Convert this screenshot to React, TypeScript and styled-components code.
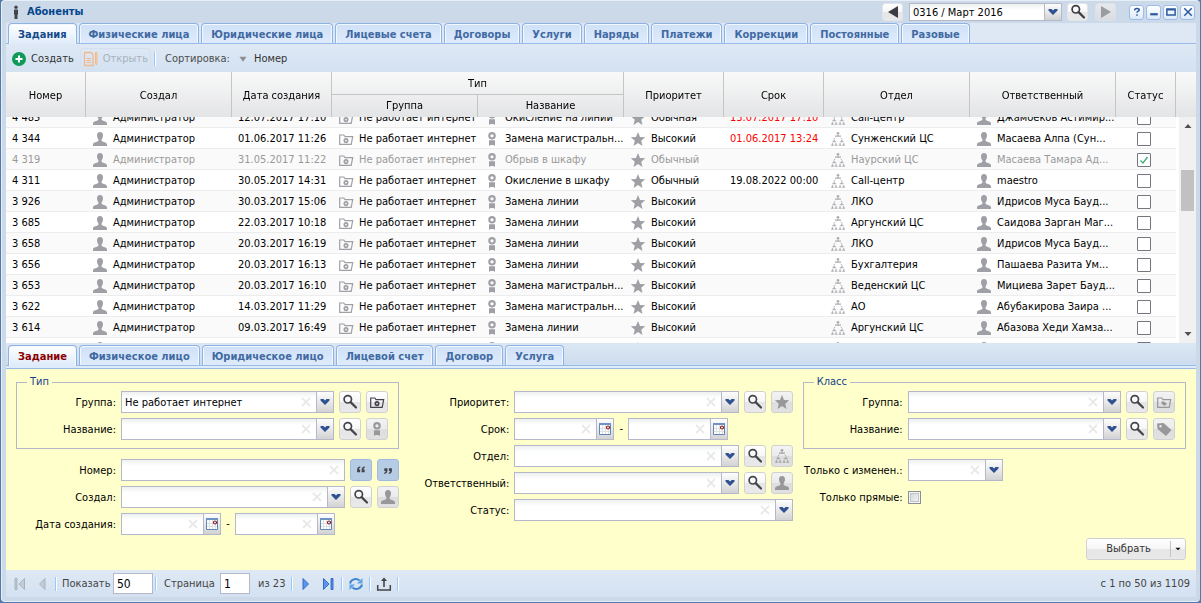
import React, { useLayoutEffect, useRef } from 'react';
import styled, { createGlobalStyle, css } from 'styled-components';

const GlobalStyle = createGlobalStyle`
  * { box-sizing: border-box; }
  body { margin: 0; background: #5279a8; }
  body, button, input, select {
    font-family: Tahoma, "DejaVu Sans Condensed", "Noto Sans", sans-serif;
    font-size: 11px;
    line-height: 14px;
  }
  button, input, select { margin: 0; color: inherit; }
`;

/* ---------- icons ---------- */

type IconName =
  | 'user' | 'folder' | 'award' | 'star' | 'sitemap' | 'tag' | 'tagFolder' | 'search'
  | 'person' | 'add' | 'edit' | 'sort' | 'quoteOpen' | 'quoteClose' | 'left' | 'right'
  | 'first' | 'prev' | 'next' | 'last' | 'refresh' | 'export' | 'calendar' | 'chevron' | 'caret'
  | 'clear' | 'help' | 'minimize' | 'maximize' | 'close' | 'up' | 'down';

const folderOutline = (
  <path d="M12.500 5.700H7L5.800 4H1.700v9.300h11.500l1.500-7.600h-2.200" fill="none" stroke="currentColor" strokeWidth="1.200" />
);

const drawings: Record<IconName, React.ReactNode> = {
  user: <path d="M8 1C5.900 1 5 2.300 5 4.300c0 1.700.6 3.100 1.400 3.900v1.600C5.600 11.200 1 11 1 13.600V15h14v-1.400c0-2.600-4.600-2.400-5.400-3.800V8.200C10.400 7.400 11 6 11 4.300 11 2.300 10.100 1 8 1z" />,
  folder: <>{folderOutline}<circle cx="8" cy="9.600" r="1.700" fill="none" stroke="currentColor" strokeWidth="1.700" /></>,
  award: <><circle cx="8" cy="4.800" r="2.700" fill="none" stroke="currentColor" strokeWidth="2.100" /><path d="M5 9.200h6V15l-1.500-1h-3L5 15z" /></>,
  star: <path d="M8 1l2 4.900 5.200.4-4 3.400 1.300 5.200L8 12.100l-4.500 2.800 1.300-5.200-4-3.400L6 5.900z" />,
  sitemap: <g opacity=".85"><circle cx="8" cy="2.200" r="1.300" /><path d="M7.300 3.500h1.400v1H11v1.300H5V4.500h2.300z" /><path d="M5.200 7.200L3.600 8.400M10.800 7.200l1.600 1.200" stroke="currentColor" /><path d="M3.600 9h1.300v1.200h1.300v1H2.300v-1h1.300zM11.100 9h1.300v1.200h1.300v1H9.800v-1h1.300zM1.800 12.300h1.300v1.400h.7v1H1.100v-1h.7zM5.400 12.300h1.300v1.400h.7v1H4.700v-1h.7zM9.400 12.300h1.300v1.400h.7v1H8.700v-1h.7zM13 12.300h1.300v1.400h.7v1h-2.700v-1h.7z" /></g>,
  tag: <path fillRule="evenodd" d="M1 2.500L7.500 2l8 7-5.500 6L1.500 8zM4.500 4a1.200 1.200 0 100 2.400 1.200 1.200 0 000-2.400z" />,
  tagFolder: <>{folderOutline}<path d="M5.500 7.500h2.500l3 2.300-2.200 2.200-3.300-2.300z" /></>,
  search: <><circle cx="5.800" cy="5.300" r="3.700" fill="none" stroke="currentColor" strokeWidth="1.700" /><path d="M8.600 8.100l5.400 5.400" stroke="currentColor" strokeWidth="2.200" strokeLinecap="round" /></>,
  person: <><circle cx="8" cy="3.200" r="1.700" /><path d="M6 5.500h4v5H9.500V15h-3v-4.500H6z" /></>,
  add: <><circle cx="8" cy="8" r="7" fill="#0f9a57" /><path d="M4.500 8h7M8 4.500v7" stroke="#fff" strokeWidth="2" /></>,
  edit: <g fill="none" stroke="#f2b98a"><path d="M1.500 1.500h6.500l2 2v11H1.500z" strokeWidth="1.300" /><path d="M3.500 7.500h4.500M3.500 9.500h4.500M3.500 11.500h4.500" /><path d="M12.500 1.500h1.500v11l-.7 1.500-.8-1.500z" fill="#f7d4b2" /></g>,
  sort: <path d="M4 5.500h8L8 11z" fill="#8d8d92" />,
  quoteOpen: <path d="M7.200 4C4.700 4.300 3.500 5.700 3.500 8v2.500h3.500v-3H5.500c0-1 .5-1.600 1.700-2zM12.400 4C9.900 4.300 8.700 5.700 8.700 8v2.500h3.500v-3h-1.500c0-1 .5-1.600 1.700-2z" />,
  quoteClose: <path d="M3.600 12.500c2.500-.3 3.700-1.700 3.700-4V6H3.800v3h1.500c0 1-.5 1.600-1.700 2zM8.800 12.500c2.500-.3 3.700-1.700 3.700-4V6H9v3h1.500c0 1-.5 1.600-1.700 2z" />,
  left: <path d="M13 2v12L3 8z" />,
  right: <path d="M3 2v12l10-6z" />,
  first: <g fill="#c3cbd4" stroke="#9aa4b0" strokeWidth=".7"><path d="M3 2.500h2v11H3zM12.500 2.500v11L7 8z" /></g>,
  prev: <path d="M11 2.500v11L5.500 8z" fill="#c3cbd4" stroke="#9aa4b0" strokeWidth=".7" />,
  next: <path d="M5 2.500v11L10.500 8z" fill="#5b97ee" stroke="#1e55b8" strokeWidth=".8" />,
  last: <g fill="#5b97ee" stroke="#1e55b8" strokeWidth=".8"><path d="M11 2.500h2v11h-2zM3.500 2.500v11L9 8z" /></g>,
  refresh: <g fill="none" stroke="#3d85cf" strokeWidth="2"><path d="M2 7.500C2.800 3.500 8 1.500 11.500 4.500" /><path d="M14 8.500c-.8 4-6 6-9.500 3" /><path d="M14.500 2v5.500H9z" fill="#5ea3e6" stroke="none" /><path d="M1.500 14V8.500H7z" fill="#5ea3e6" stroke="none" /></g>,
  export: <><path d="M1.700 9v5h12.600V9" fill="none" stroke="currentColor" strokeWidth="1.500" /><path d="M8 1.500l3 3.500H8.800v6H7.200V5H5z" /></>,
  calendar: <><path d="M2.500 2.500h11v11h-11z" fill="#fff" stroke="#5f86b5" /><path d="M2 2h12v2H2z" fill="#6f94c2" /><path d="M3 7.500h10M3 10.500h10M5.500 4v9M8.500 4v9M11.500 8v5" stroke="#dde1e6" /><circle cx="11" cy="6.500" r="1.500" fill="#fff" stroke="#8b1a1a" strokeWidth="1.200" /></>,
  chevron: <path d="M3.500 5h3L8 6.500 9.500 5h3v1.500L8 11 3.500 6.500z" fill="#2f5192" />,
  caret: <path d="M5 6.500h6L8 9.500z" fill="#111" />,
  clear: <path d="M4 4l8 8M12 4l-8 8" stroke="#e9e9eb" strokeWidth="1.800" />,
  help: <path d="M5 6V5q0-1.700 3-1.700t3 1.900c0 1.700-3 1.800-3 3.900M8 11v2" fill="none" stroke="currentColor" strokeWidth="2" />,
  minimize: <path d="M3 9.500h10v3H3z" />,
  maximize: <path fillRule="evenodd" d="M1.500 3h13v10h-13zM3.500 6v5h9V6z" />,
  close: <path d="M3 3l10 10M13 3L3 13" stroke="currentColor" strokeWidth="2" />,
  up: <path d="M4.500 10h7L8 6z" fill="#505050" />,
  down: <path d="M4.500 6h7L8 10z" fill="#505050" />,
};

const Svg = styled.svg<{ $size: number }>`
  display: block;
  flex: none;
  width: ${p => p.$size}px;
  height: ${p => p.$size}px;
`;

const Icon = ({ name, size = 16 }: { name: IconName; size?: number }) => (
  <Svg $size={size} viewBox="0 0 16 16" fill="currentColor" aria-hidden="true">{drawings[name]}</Svg>
);

/* ---------- window ---------- */

const Window = styled.main`
  display: flex;
  flex-direction: column;
  height: 100vh;
  min-height: 480px;
  border: solid #5279a8;
  border-width: 0 1px 1px;
`;

const Frame = styled.div`
  display: flex;
  flex: 1;
  flex-direction: column;
  min-height: 0;
  padding: 0 4px 4px;
  border: 1px solid #e6eef8;
  border-width: 1px 0 1px 1px;
  border-radius: 4px;
  background: #ccd9e8;
`;

const TitleBar = styled.header`
  display: flex;
  align-items: center;
  flex: none;
  height: 22px;
  padding: 0 1px 0 2px;
  color: #44444c;
`;

const Title = styled.h1`
  flex: 1;
  margin: 0 0 0 3px;
  color: #04468c;
  font-size: 11px;
  font-weight: bold;
`;

const buttonFace = css`
  border: 1px solid #d1d1d1;
  border-radius: 3px;
  background: linear-gradient(#fff, #f6f6f6 48%, #e6e6e6 52%, #e9e9e9);
`;

const NavButton = styled.button`
  display: flex;
  align-items: center;
  justify-content: center;
  width: 21px;
  height: 18px;
  padding: 0;
  color: #3c3c44;
  ${buttonFace}
  border-color: #e2e5e9;
  &:disabled {
    background: linear-gradient(#e6eaef, #d9dde2);
    border-color: #dce1e7;
    color: #9b9ba0;
  }
`;

const Period = styled.div`
  display: flex;
  width: 153px;
  height: 18px;
  margin: 0 5px 0 6px;
  color: #000;
`;

const NavGroup = styled.div`
  display: flex;
  align-items: center;
  gap: 7px;
`;

const WindowTools = styled.div`
  display: flex;
  gap: 2px;
  margin-left: 13px;
`;

const ToolButton = styled.button`
  display: flex;
  align-items: center;
  justify-content: center;
  width: 15px;
  height: 15px;
  padding: 0;
  border: 1px solid #9dbce8;
  border-radius: 3px;
  background: linear-gradient(#fff, #dce9f9);
  color: #2c5aa0;
`;

/* ---------- tabs ---------- */

const TabStrip = styled.div<{ $lower?: boolean }>`
  display: flex;
  flex: none;
  align-items: flex-end;
  gap: 2px;
  padding: ${p => (p.$lower ? '2px 2px 0' : '0 2px')};
  border-bottom: 1px solid #99bbe8;
  background: ${p => (p.$lower ? 'linear-gradient(#dbe7f3, #cddcee)' : '#dee8f5')};
`;

const TabBand = styled.div`
  flex: none;
  height: 3px;
  border-bottom: 1px solid #99bbe8;
  background: #deebfa;
`;

const Tab = styled.button<{ $active?: boolean; $accent?: boolean }>`
  flex: none;
  height: ${p => (p.$active ? 21 : 20)}px;
  margin-bottom: ${p => (p.$active ? -1 : 0)}px;
  padding: ${p => (p.$active ? '1px 9px 0' : '2px 9px 0')};
  border: 1px solid #8db2e3;
  border-bottom: 0;
  border-radius: 4px 4px 0 0;
  background: ${p => (p.$active ? 'linear-gradient(#fff, #deebfa)' : 'linear-gradient(#cfe1f7, #dfebfc)')};
  box-shadow: inset 0 1px #f2f8ff, inset 1px 0 #f2f8ff, inset -1px 0 #f2f8ff;
  color: ${p => (p.$accent ? '#8b0000' : p.$active ? '#15498b' : '#416aa3')};
  font-weight: bold;
  white-space: nowrap;
`;

/* ---------- toolbars ---------- */

const barFace = css`
  display: flex;
  flex: none;
  align-items: center;
  background: linear-gradient(#dfe9f5, #d3e1f1);
  color: #333;
`;

const Toolbar = styled.div`
  ${barFace}
  gap: 3px;
  height: 28px;
  padding: 2px 2px 0;
`;

const TextButton = styled.button`
  display: flex;
  align-items: center;
  gap: 4px;
  height: 22px;
  padding: 0 2px;
  border: 1px solid transparent;
  border-radius: 3px;
  background: none;
  &:disabled {
    border-color: #d5e0ee;
    color: #a9b1bc;
  }
`;

const Separator = styled.span`
  width: 2px;
  height: 14px;
  border-left: 1px solid #98c8ff;
  border-right: 1px solid #fff;
`;

const ToolbarText = styled.span`
  padding-left: 6px;
  color: #4c4c4c;
`;

/* ---------- grid ---------- */

const GridArea = styled.section`
  position: relative;
  flex: 1;
  min-height: 0;
  background: #fff;
`;

const GridScroll = styled.div`
  height: 100%;
  overflow-x: hidden;
  overflow-y: auto;
  scrollbar-width: none;
`;

const Table = styled.table`
  width: 100%;
  table-layout: fixed;
  border-collapse: separate;
  border-spacing: 0;
`;

const Col = styled.col<{ $w: number }>`
  width: ${p => p.$w}px;
`;

const Head = styled.thead`
  position: sticky;
  top: 0;
  z-index: 1;
  background: linear-gradient(#f9f9f9, #e3e4e6);
`;

const Th = styled.th<{ $group?: boolean; $sub?: boolean; $last?: boolean }>`
  height: ${p => (p.$group ? 23 : p.$sub ? 22 : 45)}px;
  padding: ${p => (p.$sub ? 0 : '2px 0 0')};
  border-right: ${p => (p.$last ? 0 : 1)}px solid #c5c5c5;
  border-bottom: ${p => (p.$group ? 1 : 0)}px solid #c5c5c5;
  font-weight: normal;
  text-align: center;
`;

const Row = styled.tr<{ $done?: boolean }>`
  color: ${p => (p.$done ? '#999' : '#000')};
  &:nth-child(odd) td:not(:last-child) { background: #fafafa; }
`;

const Td = styled.td<{ $late?: boolean; $wide?: boolean }>`
  height: 21px;
  padding: 1px 0 0 ${p => (p.$wide ? 21 : 6)}px;
  overflow: hidden;
  border-bottom: 1px solid #ededed;
  color: ${p => (p.$late ? '#f00' : 'inherit')};
  white-space: nowrap;
  &:last-child { border: 0; }
`;

const Cell = styled.div`
  display: flex;
  align-items: center;
  gap: 5px;
  height: 19px;
  svg { color: #9fa0a6; }
`;

const StatusBox = styled.input`
  display: block;
  width: 14px;
  height: 14px;
  appearance: none;
  border: 1px solid #75757d;
  border-radius: 1px;
  background: #fff;
  &:checked {
    background: #fff url("data:image/svg+xml,%3Csvg xmlns='http://www.w3.org/2000/svg' viewBox='0 0 12 12'%3E%3Cpath d='M2.500 6.500l2.500 2.500 4.500-6' fill='none' stroke='%233fae7c' stroke-width='1.400'/%3E%3C/svg%3E");
  }
`;

const ScrollTrack = styled.div`
  position: absolute;
  top: 45px;
  right: 0;
  bottom: 0;
  z-index: 1;
  display: flex;
  flex-direction: column;
  align-items: center;
  width: 17px;
  padding-bottom: 1px;
  background: #f1f1f1;
  svg { margin: 1px 0 0; }
`;

const ScrollLane = styled.div`
  flex: 1;
  padding-top: 36px;
`;

const ScrollThumb = styled.div`
  width: 13px;
  height: 41px;
  background: #c1c1c1;
`;

/* ---------- form ---------- */

const Form = styled.form`
  display: flex;
  flex: none;
  flex-direction: column;
  gap: 3px;
  padding: 6px 10px 10px;
  background: #ffc;
`;

const FormColumns = styled.div`
  display: grid;
  grid-template-columns: repeat(3, minmax(0, 1fr));
  gap: 10px;
`;

const FormColumn = styled.div<{ $plain?: boolean }>`
  display: flex;
  flex-direction: column;
  gap: 5px;
  padding-top: ${p => (p.$plain ? 16 : 0)}px;
`;

const FieldGroup = styled.fieldset`
  display: grid;
  gap: 5px;
  min-width: 0;
  margin: 0 0 5px;
  padding: 2px 10px 8px;
  border: 1px solid #b5b8c8;
`;

const Legend = styled.legend`
  padding: 0 3px;
  color: #15428b;
`;

const FieldRow = styled.div<{ $nested?: boolean }>`
  display: flex;
  align-items: center;
  gap: 5px;
  height: 22px;
  > label:first-child { width: ${p => (p.$nested ? 89 : 100)}px; }
`;

const Label = styled.label`
  display: flex;
  flex: none;
  justify-content: flex-end;
  padding-top: 1px;
  white-space: nowrap;
`;

const Field = styled.div<{ $w?: number }>`
  display: grid;
  grid-template-columns: minmax(0, 1fr) 18px auto;
  flex: ${p => (p.$w ? `0 0 ${p.$w}px` : '1')};
  min-width: 0;
  height: 100%;
  border: 1px solid #b5b8c8;
  background: linear-gradient(#eef0f0, #fff 6px);
`;

const controlFace = css`
  grid-row: 1;
  grid-column: 1 / -1;
  width: 100%;
  min-width: 0;
  padding: 1px 3px 0;
  border: 0;
  outline: 0;
  background: none;
  appearance: none;
`;
const Select = styled.select`${controlFace}`;
const TextInput = styled.input`${controlFace}`;

const Clear = styled.button`
  grid-row: 1;
  grid-column: 2;
  display: flex;
  align-items: center;
  padding: 0;
  border: 0;
  background: none;
`;

const Trigger = styled.span`
  display: flex;
  grid-row: 1;
  grid-column: 3;
  align-items: center;
  justify-content: center;
  width: 17px;
  border-left: 1px solid #b5b8c8;
  background: linear-gradient(#fdfdfd, #e9e9e9 50%, #d2d2d4);
  pointer-events: none;
`;

const IconButton = styled.button<{ $pressed?: boolean }>`
  display: flex;
  flex: none;
  align-items: center;
  justify-content: center;
  width: 22px;
  height: 22px;
  padding: 0;
  color: #44444c;
  ${buttonFace}
  ${p => p.$pressed && css`
    border-color: #9ebae1;
    background: #b6cbe4;
  `}
  &:disabled {
    background: linear-gradient(#f3f3f3, #ebebeb 48%, #dedede 52%, #e1e1e1);
    color: #98989c;
  }
`;

const Dash = styled.span`
  width: 4px;
  text-align: center;
`;

const Tick = styled.input`
  width: 13px;
  height: 13px;
  margin: 0;
  appearance: none;
  border: 1px solid #8e8f8f;
  background: linear-gradient(135deg, #cfd3d6, #f6f6f6);
  box-shadow: inset 0 0 0 1px #f4f4f4, inset 0 0 0 2px #c3c7cb;
`;

const Actions = styled.div`
  display: flex;
  justify-content: flex-end;
`;

const SplitButton = styled.div`
  display: flex;
  align-items: center;
  width: 100px;
  height: 22px;
  ${buttonFace}
`;

const SplitPart = styled.button<{ $menu?: boolean }>`
  display: flex;
  flex: ${p => (p.$menu ? 'none' : '1')};
  align-items: center;
  justify-content: center;
  height: 16px;
  padding: 0;
  border: 0;
  border-left: ${p => (p.$menu ? '1px solid #c4c4c4' : 0)};
  background: none;
  color: #333;
`;

/* ---------- paging ---------- */

const Paging = styled.footer`
  ${barFace}
  height: 27px;
  padding: 0 6px 0 3px;
  color: #444;
`;

const PageButton = styled.button`
  display: flex;
  align-items: center;
  justify-content: center;
  width: 22px;
  height: 22px;
  padding: 0;
  border: 0;
  background: none;
`;

const PageSeparator = styled(Separator)`
  margin: 0 2px;
`;

const PageText = styled.label<{ $w: number; $pad?: number }>`
  width: ${p => p.$w}px;
  padding: 1px 0 0 ${p => p.$pad ?? 0}px;
  white-space: nowrap;
`;

const PageInput = styled.input<{ $w: number }>`
  width: ${p => p.$w}px;
  height: 21px;
  padding: 1px 3px 0;
  border: 1px solid #b5b8c8;
  background: #fff;
  color: #000;
  font-size: 12px;
`;

const Summary = styled.span`
  margin-left: auto;
  padding-top: 1px;
`;

/* ---------- data ---------- */

const upperTabs = ['Задания', 'Физические лица', 'Юридические лица', 'Лицевые счета', 'Договоры', 'Услуги', 'Наряды', 'Платежи', 'Коррекции', 'Постоянные', 'Разовые'];
const lowerTabs = ['Задание', 'Физическое лицо', 'Юридическое лицо', 'Лицевой счет', 'Договор', 'Услуга'];
const columns = [80, 146, 100, 146, 146, 100, 100, 146, 146, 60, 20];

type Task = { id: string; date: string; name: string; priority: string; due?: string; late?: boolean; dept: string; owner: string; done?: boolean };

const tasks: Task[] = [
  { id: '4 485', date: '12.07.2017 17:10', name: 'Окисление на линии', priority: 'Обычная', due: '13.07.2017 17:10', late: true, dept: 'Call-центр', owner: 'Джамбеков Астимир...' },
  { id: '4 344', date: '01.06.2017 11:26', name: 'Замена магистральн...', priority: 'Высокий', due: '01.06.2017 13:24', late: true, dept: 'Сунженский ЦС', owner: 'Масаева Алпа (Сун...' },
  { id: '4 319', date: '31.05.2017 11:22', name: 'Обрыв в шкафу', priority: 'Обычный', dept: 'Наурский ЦС', owner: 'Масаева Тамара Ад...', done: true },
  { id: '4 311', date: '30.05.2017 14:31', name: 'Окисление в шкафу', priority: 'Обычный', due: '19.08.2022 00:00', dept: 'Call-центр', owner: 'maestro' },
  { id: '3 926', date: '30.03.2017 15:06', name: 'Замена линии', priority: 'Высокий', dept: 'ЛКО', owner: 'Идрисов Муса Бауд...' },
  { id: '3 685', date: '22.03.2017 10:18', name: 'Замена линии', priority: 'Высокий', dept: 'Аргунский ЦС', owner: 'Саидова Зарган Маг...' },
  { id: '3 658', date: '20.03.2017 16:19', name: 'Замена линии', priority: 'Высокий', dept: 'ЛКО', owner: 'Идрисов Муса Бауд...' },
  { id: '3 656', date: '20.03.2017 16:13', name: 'Замена линии', priority: 'Высокий', dept: 'Бухгалтерия', owner: 'Пашаева Разита Ум...' },
  { id: '3 653', date: '20.03.2017 16:10', name: 'Замена магистральн...', priority: 'Высокий', dept: 'Веденский ЦС', owner: 'Мициева Зарет Бауд...' },
  { id: '3 622', date: '14.03.2017 11:29', name: 'Замена магистральн...', priority: 'Высокий', dept: 'АО', owner: 'Абубакирова Заира ...' },
  { id: '3 614', date: '09.03.2017 16:49', name: 'Замена линии', priority: 'Высокий', dept: 'Аргунский ЦС', owner: 'Абазова Хеди Хамза...' },
  { id: '', date: '', name: '', priority: '', dept: '', owner: '' },
];

/* ---------- parts ---------- */

const IconCell = ({ icon, text }: { icon: IconName; text: string }) => (
  <Td><Cell><Icon name={icon} /><span>{text}</span></Cell></Td>
);

type ControlProps = { id: string; label?: string; kind: 'select' | 'date' | 'text'; value?: string; width?: number };

const Control = ({ id, label, kind, value = '', width }: ControlProps) => (
  <Field $w={width}>
    {kind === 'select'
      ? <Select id={id} aria-label={label} defaultValue={value}><option>{value}</option></Select>
      : <TextInput id={id} aria-label={label} defaultValue={value} />}
    <Clear type="button" aria-label="Очистить"><Icon name="clear" /></Clear>
    {kind !== 'text' && <Trigger><Icon name={kind === 'date' ? 'calendar' : 'chevron'} /></Trigger>}
  </Field>
);

type LookupProps = { id: string; label: string; icon: IconName; value?: string; nested?: boolean };

const Lookup = ({ id, label, icon, value, nested }: LookupProps) => (
  <FieldRow $nested={nested}>
    <Label htmlFor={id}>{label}:</Label>
    <Control id={id} kind="select" value={value} />
    <IconButton type="button" aria-label="Найти"><Icon name="search" /></IconButton>
    <IconButton type="button" aria-label="Открыть" disabled={!value}><Icon name={icon} /></IconButton>
  </FieldRow>
);

const DateRange = ({ id, label }: { id: string; label: string }) => (
  <FieldRow>
    <Label htmlFor={id}>{label}:</Label>
    <Control id={id} kind="date" width={100} />
    <Dash>-</Dash>
    <Control id={`${id}-to`} label={label} kind="date" width={100} />
  </FieldRow>
);

const TaskGrid = () => {
  const scroller = useRef<HTMLDivElement>(null);
  useLayoutEffect(() => {
    if (scroller.current) scroller.current.scrollTop = 10;
  }, []);
  return (
    <GridArea>
      <GridScroll ref={scroller}>
        <Table>
          <colgroup>{columns.map((w, i) => <Col key={i} $w={w} />)}</colgroup>
          <Head>
            <tr>
              <Th rowSpan={2}>Номер</Th>
              <Th rowSpan={2}>Создал</Th>
              <Th rowSpan={2}>Дата создания</Th>
              <Th colSpan={2} $group>Тип</Th>
              <Th rowSpan={2}>Приоритет</Th>
              <Th rowSpan={2}>Срок</Th>
              <Th rowSpan={2}>Отдел</Th>
              <Th rowSpan={2}>Ответственный</Th>
              <Th rowSpan={2}>Статус</Th>
              <Th rowSpan={2} $last />
            </tr>
            <tr>
              <Th $sub>Группа</Th>
              <Th $sub>Название</Th>
            </tr>
          </Head>
          <tbody>
            {tasks.map((t, i) => (
              <Row key={i} $done={t.done}>
                <Td>{t.id}</Td>
                <IconCell icon="user" text={t.id && 'Администратор'} />
                <Td>{t.date}</Td>
                <IconCell icon="folder" text={t.id && 'Не работает интернет'} />
                <IconCell icon="award" text={t.name} />
                <IconCell icon="star" text={t.priority} />
                <Td $late={t.late}>{t.due}</Td>
                <IconCell icon="sitemap" text={t.dept} />
                <IconCell icon="user" text={t.owner} />
                <Td $wide><StatusBox type="checkbox" aria-label="Статус" defaultChecked={t.done} /></Td>
                <Td />
              </Row>
            ))}
          </tbody>
        </Table>
      </GridScroll>
      <ScrollTrack>
        <Icon name="up" />
        <ScrollLane><ScrollThumb /></ScrollLane>
        <Icon name="down" />
      </ScrollTrack>
    </GridArea>
  );
};

const FilterForm = () => (
  <Form onSubmit={e => e.preventDefault()}>
    <FormColumns>
      <FormColumn>
        <FieldGroup>
          <Legend>Тип</Legend>
          <Lookup nested id="type-group" label="Группа" icon="folder" value="Не работает интернет" />
          <Lookup nested id="type-name" label="Название" icon="award" />
        </FieldGroup>
        <FieldRow>
          <Label htmlFor="number">Номер:</Label>
          <Control id="number" kind="text" />
          <IconButton type="button" $pressed aria-label="Начало"><Icon name="quoteOpen" size={14} /></IconButton>
          <IconButton type="button" $pressed aria-label="Конец"><Icon name="quoteClose" size={14} /></IconButton>
        </FieldRow>
        <Lookup id="author" label="Создал" icon="user" />
        <DateRange id="created" label="Дата создания" />
      </FormColumn>
      <FormColumn $plain>
        <Lookup id="priority" label="Приоритет" icon="star" />
        <DateRange id="due" label="Срок" />
        <Lookup id="dept" label="Отдел" icon="sitemap" />
        <Lookup id="owner" label="Ответственный" icon="user" />
        <FieldRow>
          <Label htmlFor="status">Статус:</Label>
          <Control id="status" kind="select" />
        </FieldRow>
      </FormColumn>
      <FormColumn>
        <FieldGroup>
          <Legend>Класс</Legend>
          <Lookup nested id="class-group" label="Группа" icon="tagFolder" />
          <Lookup nested id="class-name" label="Название" icon="tag" />
        </FieldGroup>
        <FieldRow>
          <Label htmlFor="changed">Только с изменен.:</Label>
          <Control id="changed" kind="select" width={95} />
        </FieldRow>
        <FieldRow>
          <Label htmlFor="direct">Только прямые:</Label>
          <Tick id="direct" type="checkbox" />
        </FieldRow>
      </FormColumn>
    </FormColumns>
    <Actions>
      <SplitButton>
        <SplitPart type="submit">Выбрать</SplitPart>
        <SplitPart type="button" $menu aria-label="Меню"><Icon name="caret" size={14} /></SplitPart>
      </SplitButton>
    </Actions>
  </Form>
);

const PagingBar = () => (
  <Paging>
    <PageButton disabled aria-label="Первая"><Icon name="first" /></PageButton>
    <PageButton disabled aria-label="Предыдущая"><Icon name="prev" /></PageButton>
    <PageSeparator />
    <PageText $w={54} $pad={3} htmlFor="page-size">Показать</PageText>
    <PageInput $w={40} id="page-size" defaultValue="50" />
    <PageSeparator />
    <PageText $w={61} $pad={5} htmlFor="page">Страница</PageText>
    <PageInput $w={30} id="page" defaultValue="1" />
    <PageText as="span" $w={39} $pad={8}>из 23</PageText>
    <PageSeparator />
    <PageButton aria-label="Следующая"><Icon name="next" /></PageButton>
    <PageButton aria-label="Последняя"><Icon name="last" /></PageButton>
    <PageSeparator />
    <PageButton aria-label="Обновить"><Icon name="refresh" /></PageButton>
    <PageSeparator />
    <PageButton aria-label="Выгрузить"><Icon name="export" /></PageButton>
    <PageSeparator />
    <Summary>с 1 по 50 из 1109</Summary>
  </Paging>
);

export default function App() {
  return (
    <>
      <GlobalStyle />
      <Window>
        <Frame>
          <TitleBar>
            <Icon name="person" />
            <Title>Абоненты</Title>
            <NavButton aria-label="Назад"><Icon name="left" /></NavButton>
            <Period>
              <Field>
                <Select aria-label="Период" defaultValue="0316 / Март 2016"><option>0316 / Март 2016</option></Select>
                <Trigger><Icon name="chevron" /></Trigger>
              </Field>
            </Period>
            <NavGroup>
              <NavButton aria-label="Найти"><Icon name="search" /></NavButton>
              <NavButton disabled aria-label="Вперёд"><Icon name="right" /></NavButton>
            </NavGroup>
            <WindowTools>
              <ToolButton aria-label="Справка"><Icon name="help" size={12} /></ToolButton>
              <ToolButton aria-label="Свернуть"><Icon name="minimize" size={12} /></ToolButton>
              <ToolButton aria-label="Развернуть"><Icon name="maximize" size={12} /></ToolButton>
              <ToolButton aria-label="Закрыть"><Icon name="close" size={12} /></ToolButton>
            </WindowTools>
          </TitleBar>
          <TabStrip role="tablist">
            {upperTabs.map((t, i) => <Tab key={t} role="tab" aria-selected={i === 0} $active={i === 0}>{t}</Tab>)}
          </TabStrip>
          <Toolbar>
            <TextButton><Icon name="add" />Создать</TextButton>
            <TextButton disabled><Icon name="edit" />Открыть</TextButton>
            <Separator />
            <ToolbarText>Сортировка:</ToolbarText>
            <TextButton><Icon name="sort" size={14} />Номер</TextButton>
          </Toolbar>
          <TaskGrid />
          <TabStrip role="tablist" $lower>
            {lowerTabs.map((t, i) => <Tab key={t} role="tab" aria-selected={i === 0} $active={i === 0} $accent={i === 0}>{t}</Tab>)}
          </TabStrip>
          <TabBand />
          <FilterForm />
          <PagingBar />
        </Frame>
      </Window>
    </>
  );
}
